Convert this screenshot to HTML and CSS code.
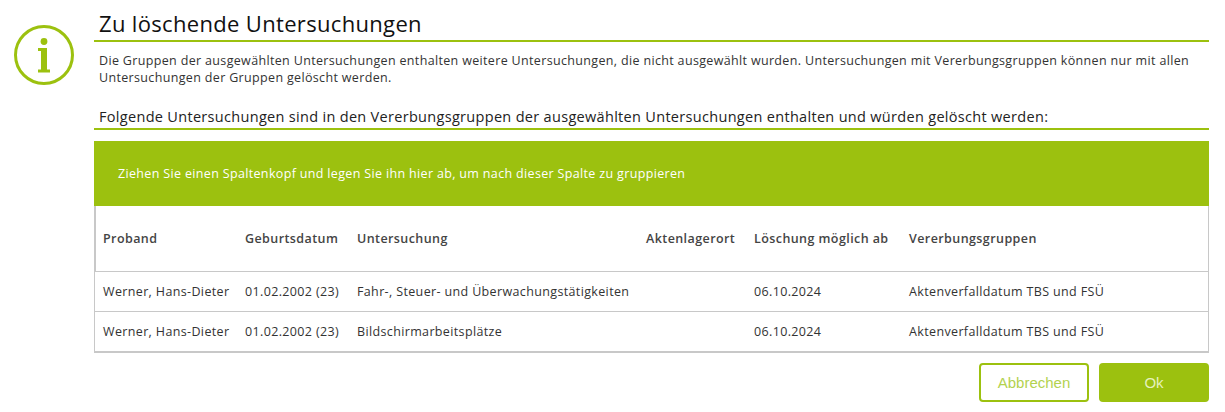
FILE: index.html
```html
<!DOCTYPE html>
<html lang="de">
<head>
    <meta charset="UTF-8">
    <title>Zu löschende Untersuchungen</title>
    <link rel="stylesheet" href="styles.css">
</head>
<body>
    <div class="dialog">
        <div class="dialog-icon">
            <svg width="60" height="60" viewBox="0 0 60 60">
                <circle cx="30" cy="30" r="28.5" fill="none" stroke="#9cc10f" stroke-width="3"></circle>
                <circle cx="30" cy="16.500" r="3.400" fill="#9cc10f"></circle>
                <path d="M24 23H33V44.500H36V47.500H24V44.500H27V26H24Z" fill="#9cc10f"></path>
            </svg>
        </div>
        <div class="dialog-main">
            <h1 class="title">Zu löschende Untersuchungen</h1>
            <p class="intro">Die Gruppen der ausgewählten Untersuchungen enthalten weitere Untersuchungen, die nicht ausgewählt wurden. Untersuchungen mit Vererbungsgruppen können nur mit allen Untersuchungen der Gruppen gelöscht werden.</p>
            <h2 class="subtitle">Folgende Untersuchungen sind in den Vererbungsgruppen der ausgewählten Untersuchungen enthalten und würden gelöscht werden:</h2>

            <div class="group-panel">Ziehen Sie einen Spaltenkopf und legen Sie ihn hier ab, um nach dieser Spalte zu gruppieren</div>

            <table class="grid">
                <colgroup>
                    <col class="col-proband">
                    <col class="col-geburt">
                    <col class="col-untersuchung">
                    <col class="col-lager">
                    <col class="col-loeschung">
                    <col>
                </colgroup>
                <thead>
                    <tr>
                        <th>Proband</th>
                        <th>Geburtsdatum</th>
                        <th>Untersuchung</th>
                        <th>Aktenlagerort</th>
                        <th>Löschung möglich ab</th>
                        <th>Vererbungsgruppen</th>
                    </tr>
                </thead>
                <tbody>
                    <tr>
                        <td>Werner, Hans-Dieter</td>
                        <td>01.02.2002 (23)</td>
                        <td>Fahr-, Steuer- und Überwachungstätigkeiten</td>
                        <td></td>
                        <td>06.10.2024</td>
                        <td>Aktenverfalldatum TBS und FSÜ</td>
                    </tr>
                    <tr>
                        <td>Werner, Hans-Dieter</td>
                        <td>01.02.2002 (23)</td>
                        <td>Bildschirmarbeitsplätze</td>
                        <td></td>
                        <td>06.10.2024</td>
                        <td>Aktenverfalldatum TBS und FSÜ</td>
                    </tr>
                </tbody>
            </table>

            <div class="actions">
                <button class="btn btn-cancel" type="button">Abbrechen</button>
                <button class="btn btn-ok" type="button">Ok</button>
            </div>
        </div>
    </div>
</body>
</html>
```

FILE: styles.css
```css
body {
    margin: 0;
    background-color: #fff;
    color: #222;
    font-family: "Open Sans", "Noto Sans", sans-serif;
    overflow: hidden;
}
.dialog {
    display: flex;
    padding: 0 16px 0 0;
}
.dialog-icon {
    width: 94px;
    flex: none;
    padding: 25px 0 0 14px;
    box-sizing: border-box;
}
.dialog-main {
    flex: 1;
    min-width: 0;
}
.title {
    margin: 0;
    height: 40px;
    padding-left: 5px;
    border-bottom: 2px solid #9cc10f;
    font-size: 22px;
    font-weight: 400;
    line-height: 47px;
    letter-spacing: 0.33px;
    color: #111;
}
.intro {
    margin: 10px 0 0;
    padding-left: 5px;
    font-size: 12.500px;
    line-height: 17px;
    letter-spacing: 0.34px;
    color: #333;
}
.subtitle {
    margin: 21px 0 0;
    padding-left: 5px;
    height: 21px;
    border-bottom: 2px solid #9cc10f;
    font-size: 14.500px;
    font-weight: 400;
    line-height: 20px;
    letter-spacing: 0.31px;
    color: #222;
}
.group-panel {
    margin-top: 11px;
    height: 65px;
    padding-left: 24px;
    background-color: #9cc10f;
    color: #fff;
    font-size: 12.500px;
    line-height: 66px;
    letter-spacing: 0.34px;
}
.grid {
    width: 100%;
    border-collapse: separate;
    border-spacing: 0;
    table-layout: fixed;
    font-size: 12.500px;
    letter-spacing: 0.36px;
    border-right: 1px solid #c8c8c8;
    border-bottom: 2px solid #c8c8c8;
    border-left: 1px solid #c8c8c8;
}
.col-proband { width: 142px; }
.col-geburt { width: 112px; }
.col-untersuchung { width: 289px; }
.col-lager { width: 108px; }
.col-loeschung { width: 155px; }
.grid th {
    height: 65px;
    padding: 0 0 0 8px;
    border-bottom: 1px solid #c8c8c8;
    text-align: left;
    font-weight: 600;
    letter-spacing: 0.42px;
    color: #444;
    white-space: nowrap;
}
.grid th:first-child {
    padding-left: 7px;
    border-left: 1px solid #c8c8c8;
}
.grid td {
    height: 39px;
    padding: 0 0 0 8px;
    border-bottom: 1px solid #c8c8c8;
    white-space: nowrap;
    color: #333;
}
.grid tbody tr:last-child td {
    border-bottom: none;
}
.actions {
    display: flex;
    justify-content: flex-end;
    gap: 10px;
    margin-top: 10px;
}
.btn {
    width: 110px;
    height: 39px;
    border-radius: 4px;
    font-family: "Liberation Sans", Arial, sans-serif;
    font-size: 15px;
    cursor: pointer;
}
.btn-cancel {
    background-color: #fff;
    border: 2px solid #9cc10f;
    color: #b3d24f;
}
.btn-ok {
    background-color: #9cc10f;
    border: none;
    color: #e6f2bd;
}
```
